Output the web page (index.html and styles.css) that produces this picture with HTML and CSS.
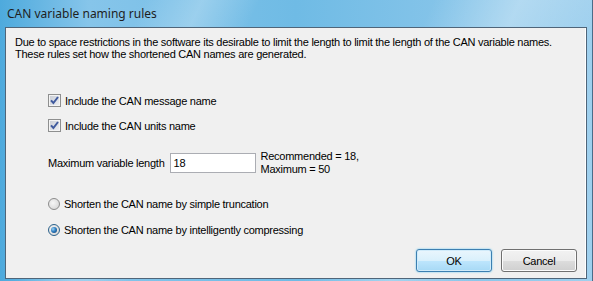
FILE: index.html
```html
<!DOCTYPE html>
<html lang="en">
<head>
  <meta charset="UTF-8">
  <title>CAN variable naming rules</title>
  <link rel="stylesheet" href="styles.css">
</head>
<body>
  <div class="window">
    <div class="titlebar">CAN variable naming rules</div>

    <div class="client">
      <p class="intro">
        Due to space restrictions in the software its desirable to limit the length to limit the length of the CAN variable names.<br>
        These rules set how the shortened CAN names are generated.
      </p>

      <div class="options">
        <label class="check-row first">
          <span class="checkbox checked">
            <svg width="9" height="9" viewBox="0 0 9 9"><path d="M1 4.3 L3.4 7 L8 1" fill="none" stroke="#3f5a9e" stroke-width="2"/></svg>
          </span>
          Include the CAN message name
        </label>

        <label class="check-row">
          <span class="checkbox checked">
            <svg width="9" height="9" viewBox="0 0 9 9"><path d="M1 4.3 L3.4 7 L8 1" fill="none" stroke="#3f5a9e" stroke-width="2"/></svg>
          </span>
          Include the CAN units name
        </label>

        <div class="length-row">
          <span class="length-label">Maximum variable length</span>
          <span class="textbox">18</span>
          <span class="length-note">Recommended = 18,<br>Maximum = 50</span>
        </div>

        <label class="radio-row first">
          <span class="radio"></span>
          Shorten the CAN name by simple truncation
        </label>

        <label class="radio-row">
          <span class="radio selected"></span>
          Shorten the CAN name by intelligently compressing
        </label>
      </div>

      <div class="buttons">
        <button class="btn default">OK</button>
        <button class="btn">Cancel</button>
      </div>
    </div>
  </div>
</body>
</html>
```

FILE: styles.css
```css
* {
  margin: 0;
  padding: 0;
  box-sizing: border-box;
}

body {
  width: 593px;
  height: 281px;
  overflow: hidden;
  font-family: "Liberation Sans", Arial, sans-serif;
  font-size: 11px;
  letter-spacing: -0.25px;
  color: #000000;
}

/* Aero style frame */
.window {
  width: 593px;
  height: 281px;
  display: flex;
  flex-direction: column;
  padding: 0 5px 2px 5px;
  background:
    linear-gradient(115deg, rgba(255,255,255,0) 20%, rgba(255,255,255,0.25) 28%, rgba(255,255,255,0) 36%,
                    rgba(255,255,255,0) 60%, rgba(255,255,255,0.3) 72%, rgba(255,255,255,0) 84%),
    linear-gradient(to right, #4eaadd 0%, #86c5ea 15%, #6fbbe5 50%, #85c4e9 75%, #9fd0ee 100%);
  border-right: 1px solid #4b6c89;
}

.titlebar {
  height: 27px;
  display: flex;
  align-items: center;
  padding-left: 2px;
  padding-bottom: 1px;
  font-family: "Noto Sans", "Open Sans", sans-serif;
  font-size: 12px;
  letter-spacing: 0;
  color: #1e1e1e;
}

.client {
  flex: 1;
  display: flex;
  flex-direction: column;
  background-color: #f0f0f0;
  border: 1px solid #4f6579;
  box-shadow: inset -1px 0 0 #ffffff;
  padding: 8px 9px 6px 9px;
}

.intro {
  line-height: 12px;
  white-space: nowrap;
}

.options {
  padding-left: 33px;
}

.check-row,
.radio-row {
  display: flex;
  align-items: center;
  height: 13px;
  gap: 4px;
}

.check-row.first {
  margin-top: 34px;
}

.check-row + .check-row {
  margin-top: 12px;
}

.checkbox {
  width: 13px;
  height: 13px;
  border: 1px solid #8e8f8f;
  background: linear-gradient(135deg, #c8ccd4, #eef0f4);
  display: flex;
  align-items: center;
  justify-content: center;
  box-shadow: inset 0 0 0 1px #f4f4f4;
}

.length-row {
  display: flex;
  align-items: center;
  margin-top: 18px;
}

.length-label {
  margin-right: 5px;
}

.textbox {
  width: 86px;
  height: 20px;
  background: #ffffff;
  border: 1px solid #abadb3;
  border-top-color: #abadb3;
  padding: 2px 0 0 3px;
  line-height: 14px;
}

.length-note {
  margin-left: 5px;
  line-height: 13px;
}

.radio-row.first {
  margin-top: 21px;
}

.radio-row + .radio-row {
  margin-top: 13px;
}

.radio {
  width: 12px;
  height: 12px;
  border-radius: 50%;
  border: 1px solid #8c8c8c;
  background: radial-gradient(circle at 40% 40%, #f6f6f6 0%, #dcdcdc 70%, #cfcfcf 100%);
  position: relative;
}

.radio.selected {
  border-color: #2c628b;
}

.radio.selected::after {
  content: "";
  position: absolute;
  left: 2px;
  top: 2px;
  width: 6px;
  height: 6px;
  border-radius: 50%;
  background: radial-gradient(circle at 35% 35%, #9ad4f5 0%, #2f7dc0 45%, #0d3a6a 100%);
}

.buttons {
  margin-top: auto;
  display: flex;
  justify-content: flex-end;
  gap: 9px;
}

.btn {
  width: 76px;
  height: 23px;
  font-family: "Liberation Sans", Arial, sans-serif;
  font-size: 11px;
  letter-spacing: -0.25px;
  color: #000000;
  border: 1px solid #707070;
  border-radius: 3px;
  background: linear-gradient(to bottom, #f2f2f2 0%, #ebebeb 50%, #dddddd 51%, #cfcfcf 100%);
  box-shadow: inset 0 0 0 1px #fcfcfc;
}

.btn.default {
  border-color: #3c7fb1;
  background: linear-gradient(to bottom, #eaf6fd 0%, #d9f0fc 50%, #bee6fd 51%, #a7d9f5 100%);
  box-shadow: inset 0 0 0 1px #d0ebfa, 0 0 2px #5cc4f2;
}
```
